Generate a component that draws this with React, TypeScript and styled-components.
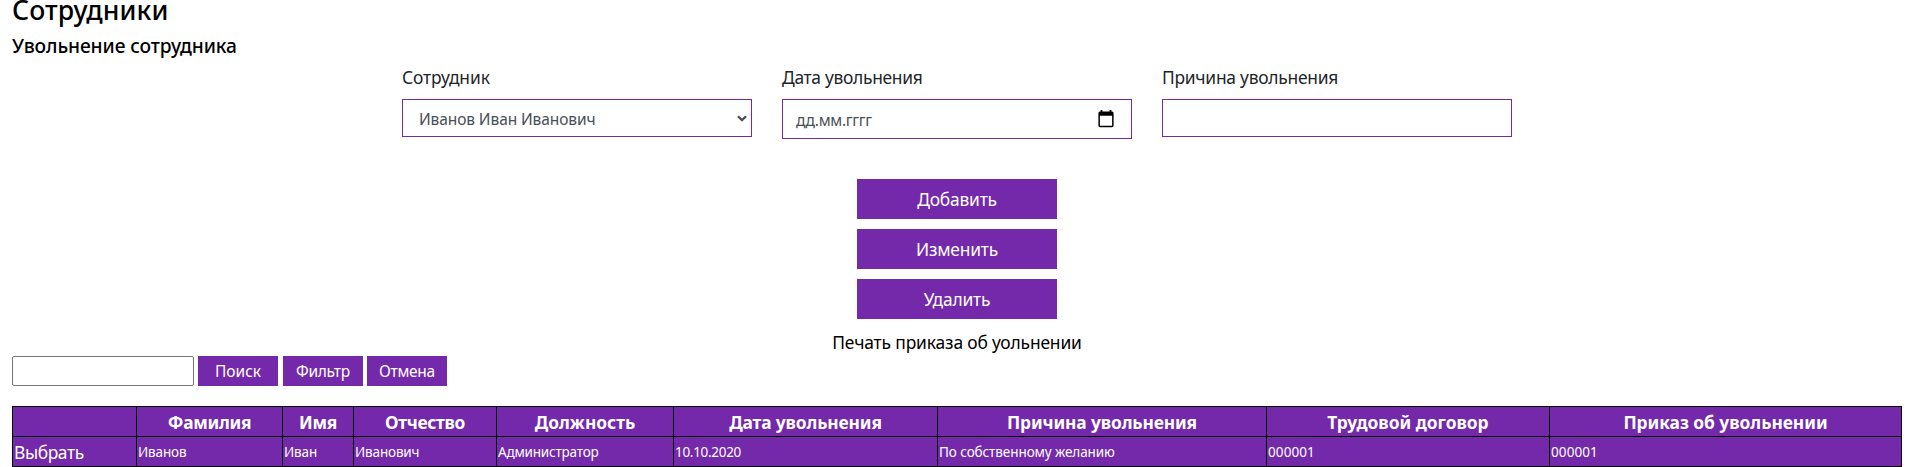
import React from 'react';
import styled, { createGlobalStyle } from 'styled-components';

const purple = '#7329aa';

const GlobalStyle = createGlobalStyle`
  *, *::before, *::after { box-sizing: border-box; }
  body {
    margin: 0;
    background: #fff;
    color: #000;
    font-family: "Noto Sans", "Open Sans", sans-serif;
    overflow: hidden;
  }
`;

const Page = styled.main`
  height: 467px;
  padding: 0 7px 0 12px;
  overflow: hidden;
`;

const Title = styled.h2`
  margin: -7px 0 7px;
  font-size: 26.6px;
  line-height: 34px;
  font-weight: 500;
  letter-spacing: 0.1px;
`;

const Subtitle = styled.h5`
  margin: 0 0 6px;
  font-size: 19.2px;
  line-height: 24px;
  font-weight: 550;
  letter-spacing: -0.1px;
`;

const Tracked = styled.span<{ $track?: number }>`
  letter-spacing: ${({ $track = 0 }) => $track}px;
`;

const Fields = styled.div`
  display: flex;
  justify-content: center;
  align-items: flex-start;
  gap: 30px;
  height: 115px;
`;

const Field = styled.div`
  width: 350px;
`;

const Label = styled.label`
  display: block;
  margin-bottom: 8px;
  color: #212529;
  font-size: 17.4px;
  line-height: 27px;
`;

const Control = styled.div<{ $height?: number; $left?: number; $right?: number }>`
  display: flex;
  align-items: center;
  justify-content: space-between;
  height: ${({ $height = 38 }) => $height}px;
  padding: 0 ${({ $right = 12 }) => $right}px 0 ${({ $left = 12 }) => $left}px;
  border: 1px solid ${purple};
  color: #495057;
  font-size: 15.5px;
  line-height: 24px;
`;

const Value = styled(Tracked)`
  padding-top: 2px;
`;

const TextInput = styled.input`
  display: block;
  width: 100%;
  height: 38px;
  border: 1px solid ${purple};
  outline: none;
`;

const Actions = styled.div`
  display: flex;
  flex-direction: column;
  align-items: center;
  gap: 10px;
`;

const Button = styled.button<{ $small?: boolean }>`
  width: ${({ $small }) => ($small ? 80 : 200)}px;
  height: ${({ $small }) => ($small ? 30 : 40)}px;
  padding: 0;
  border: 0;
  background: ${purple};
  color: #fff;
  font-family: inherit;
  font-size: ${({ $small }) => ($small ? 15.5 : 17.4)}px;
  line-height: 26px;
`;

const PrintLink = styled.a`
  font-size: 17.4px;
  line-height: 27px;
  letter-spacing: -0.14px;
`;

const SearchBar = styled.div`
  display: flex;
  margin-bottom: 20px;
`;

const SearchInput = styled.input`
  width: 182px;
  height: 30px;
  margin-right: 4px;
  border: 1px solid #767676;
  border-radius: 2px;
  outline: none;
`;

const SearchButtons = styled.div`
  display: grid;
  grid-template-columns: 85px 84px 80px;
`;

const Table = styled.div`
  border: solid #000;
  border-width: 0 1px 1px 0;
  background: ${purple};
  color: #fff;
`;

const Row = styled.div`
  display: grid;
  grid-template-columns: 124px 146px 71px 143px 177px 264px 329px 283px 352px;
  height: 30px;
`;

const HeadCell = styled.div`
  border: solid #000;
  border-width: 1px 0 0 1px;
  font-size: 17.4px;
  font-weight: 700;
  line-height: 30px;
  text-align: center;
  white-space: nowrap;
`;

const Cell = styled.div<{ $large?: boolean }>`
  padding-left: 1px;
  border: solid #000;
  border-width: 1px 0 0 1px;
  font-size: ${({ $large }) => ($large ? 17.4 : 13.5)}px;
  line-height: 30px;
  white-space: nowrap;
`;

type Text = [string, number];

const headers: Text[] = [
  ['', 0],
  ['Фамилия', -0.3],
  ['Имя', -0.3],
  ['Отчество', -0.35],
  ['Должность', 0],
  ['Дата увольнения', -0.14],
  ['Причина увольнения', -0.14],
  ['Трудовой договор', 0],
  ['Приказ об увольнении', -0.04],
];

const record: Text[] = [
  ['Выбрать', -0.4],
  ['Иванов', -0.15],
  ['Иван', -0.15],
  ['Иванович', -0.15],
  ['Администратор', -0.2],
  ['10.10.2020', -0.3],
  ['По собственному желанию', -0.08],
  ['000001', 0.1],
  ['000001', 0.1],
];

const Chevron = () => (
  <svg width="10" height="7" viewBox="0 0 10 7" fill="none">
    <path d="M1 1.2 5 5.1 9 1.2" stroke="#495057" strokeWidth="2.3" />
  </svg>
);

const Calendar = () => (
  <svg width="16" height="18" viewBox="0 0 16 18">
    <path
      fill="#000"
      fillRule="evenodd"
      d="M2.6 0h1.8v1.6h7.2V0h1.8v1.6H14A1.6 1.6 0 0 1 15.6 3.2v12.4A1.6 1.6 0 0 1 14 17.2H2A1.6 1.6 0 0 1 .4 15.6V3.2A1.6 1.6 0 0 1 2 1.6h.6V0ZM1.9 5.7v10h12.2v-10Z"
    />
  </svg>
);

export default function App() {
  return (
    <>
      <GlobalStyle />
      <Page>
        <Title>Сотрудники</Title>
        <Subtitle>Увольнение сотрудника</Subtitle>
        <Fields>
          <Field>
            <Label><Tracked $track={-0.1}>Сотрудник</Tracked></Label>
            <Control $left={16} $right={4}>
              <Value $track={-0.1}>Иванов Иван Иванович</Value>
              <Chevron />
            </Control>
          </Field>
          <Field>
            <Label><Tracked $track={-0.3}>Дата увольнения</Tracked></Label>
            <Control $height={40} $left={13} $right={17}>
              <Value $track={-0.3}>дд.мм.гггг</Value>
              <Calendar />
            </Control>
          </Field>
          <Field>
            <Label><Tracked $track={-0.25}>Причина увольнения</Tracked></Label>
            <TextInput />
          </Field>
        </Fields>
        <Actions>
          <Button><Tracked $track={-0.2}>Добавить</Tracked></Button>
          <Button><Tracked $track={-0.2}>Изменить</Tracked></Button>
          <Button><Tracked $track={-0.2}>Удалить</Tracked></Button>
          <PrintLink>Печать приказа об уольнении</PrintLink>
        </Actions>
        <SearchBar>
          <SearchInput />
          <SearchButtons>
            <Button $small>Поиск</Button>
            <Button $small><Tracked $track={-0.25}>Фильтр</Tracked></Button>
            <Button $small><Tracked $track={-0.3}>Отмена</Tracked></Button>
          </SearchButtons>
        </SearchBar>
        <Table>
          <Row>
            {headers.map(([text, track], i) => (
              <HeadCell key={i}><Tracked $track={track}>{text}</Tracked></HeadCell>
            ))}
          </Row>
          <Row>
            {record.map(([text, track], i) => (
              <Cell key={i} $large={i === 0}><Tracked $track={track}>{text}</Tracked></Cell>
            ))}
          </Row>
        </Table>
      </Page>
    </>
  );
}
